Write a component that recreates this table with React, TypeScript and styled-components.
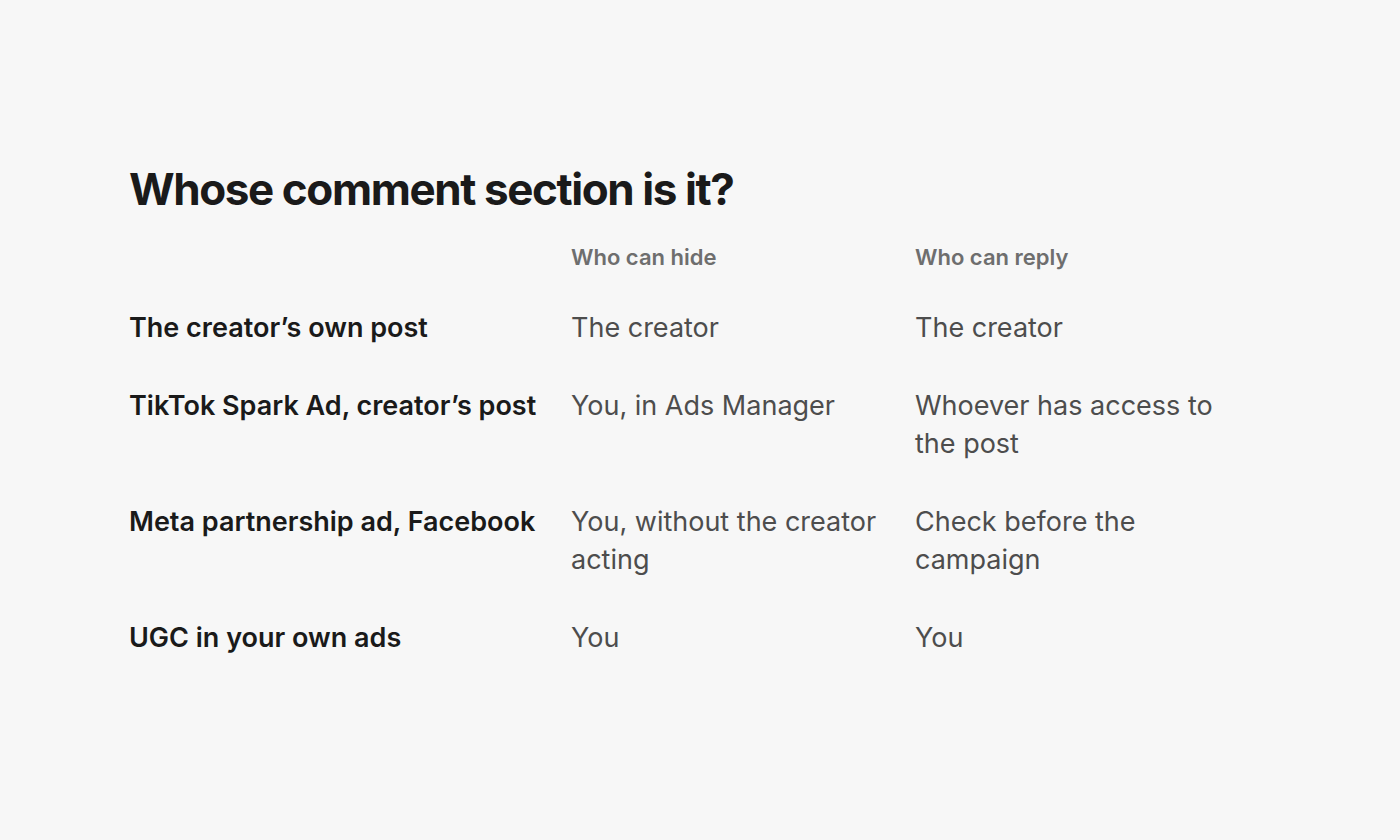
import React from "react";
import styled, { createGlobalStyle } from "styled-components";

const Global = createGlobalStyle`
  html, body { margin: 0; padding: 0; background: #f7f7f7; }
  body { font-family: Inter, "Noto Sans", sans-serif; -webkit-font-smoothing: antialiased; }
`;

const Page = styled.main`
  width: 1400px;
  height: 840px;
  box-sizing: border-box;
  padding: 163px 0 0 129px;
  background: #f7f7f7;
`;

const Title = styled.h1`
  margin: 0;
  font-size: 44px;
  line-height: 53px;
  font-weight: 700;
  letter-spacing: -0.032em;
  color: #1a1a1a;
`;

const Table = styled.div`
  margin-top: 27px;
  display: grid;
  grid-template-columns: 418px 320px 320px;
  column-gap: 24px;
  row-gap: 40px;
`;

const Head = styled.div`
  font-size: 22px;
  line-height: 28px;
  font-weight: 600;
  color: #6e6e6e;
  margin-bottom: -2px;
`;

const Label = styled.div`
  font-size: 27px;
  line-height: 38px;
  font-weight: 600;
  color: #1a1a1a;
`;

const Value = styled.div`
  font-size: 27px;
  line-height: 38px;
  font-weight: 400;
  color: #4d4d4d;
`;

const rows = [
  ["The creator’s own post", "The creator", "The creator"],
  ["TikTok Spark Ad, creator’s post", "You, in Ads Manager", "Whoever has access to the post"],
  ["Meta partnership ad, Facebook", "You, without the creator acting", "Check before the campaign"],
  ["UGC in your own ads", "You", "You"],
];

export default function App() {
  return (
    <Page>
      <Global />
      <Title>Whose comment section is it?</Title>
      <Table>
        <div />
        <Head>Who can hide</Head>
        <Head>Who can reply</Head>
        {rows.map((r) => (
          <React.Fragment key={r[0]}>
            <Label>{r[0]}</Label>
            <Value>{r[1]}</Value>
            <Value>{r[2]}</Value>
          </React.Fragment>
        ))}
      </Table>
    </Page>
  );
}
